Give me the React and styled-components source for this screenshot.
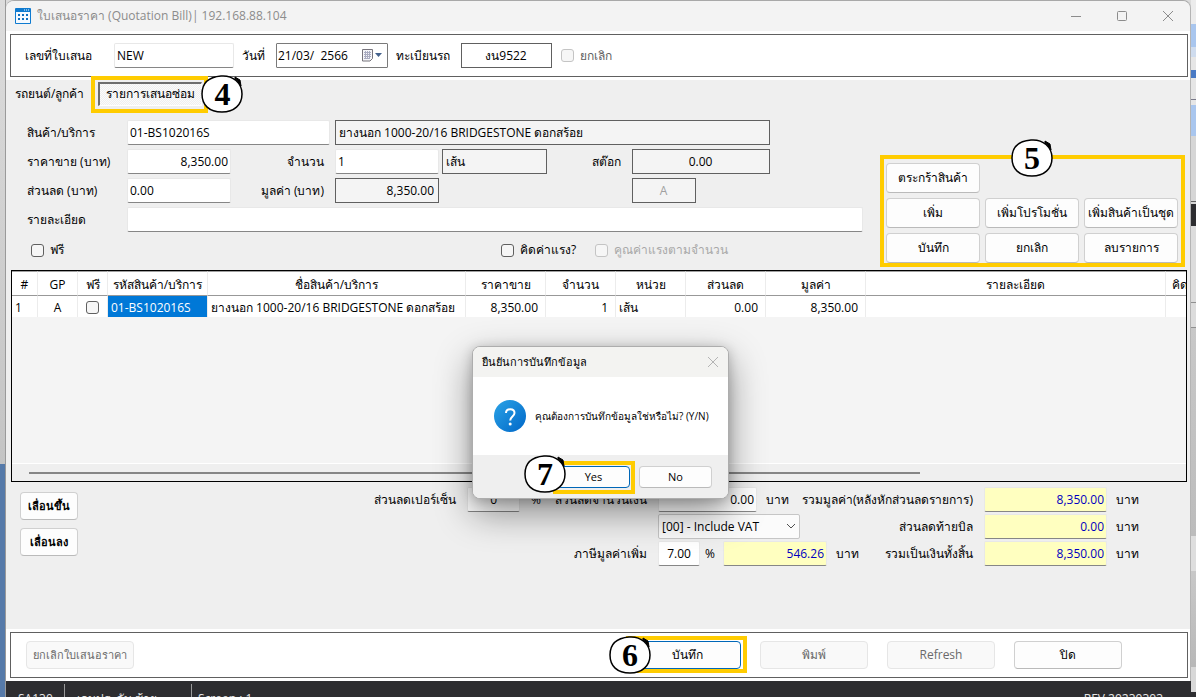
import React from 'react'
import styled, { createGlobalStyle, css } from 'styled-components'

const GlobalStyle = createGlobalStyle`
    * {
        box-sizing: border-box;
    }

    body {
        margin: 0;
        background: #e4e4e4;
    }

    body, input, select, button {
        font-family: "Open Sans", "Noto Sans", "Liberation Sans", sans-serif;
        font-size: 12px;
        line-height: 16px;
        color: #000;
    }
`

const yellow = '#ffcc00'

const Desktop = styled.div`
    position: relative;
    display: flex;
    height: 100vh;
    overflow: hidden;
`

const LeftEdge = styled.div`
    flex: none;
    width: 6px;
    background: linear-gradient(#dcdcdc, #c4c4c4) top / 100% 464px no-repeat, #567aa9;
    border-right: 1px solid #9a9a9a;
`

const RightEdge = styled.div`
    flex: none;
    width: 5px;
    background: linear-gradient(
        #ececec 24px, #a9c6ee 24px, #a9c6ee 47px, #cfdcee 47px, #cfdcee 57px, #e6e6e6 57px,
        #e6e6e6 70px, #4a7ac4 70px, #4a7ac4 78px, #e6e6e6 78px, #e6e6e6 99px, #7a7a8a 99px,
        #7a7a8a 100px, #e6e6e6 100px, #e6e6e6 105px, #a9c6ee 105px, #a9c6ee 136px,
        #d6d6d6 136px, #d6d6d6 201px, #606060 201px, #606060 202px, #d6d6d6 202px,
        #d6d6d6 204px, #2d2d30 204px, #2d2d30 226px, #dcdcdc 226px, #dcdcdc 302px,
        #909090 302px, #909090 303px, #dcdcdc 303px, #dcdcdc 327px, #909090 327px,
        #909090 328px, #c8c8c8 328px, #bcbcbc 536px, #dedede 536px, #dedede 571px,
        #c8c8c8 571px, #b8b8b8 667px, #d8d8d8 667px, #d8d8d8 692px, #2d2d30 692px
    );
`

const Column = styled.div`
    flex: 1;
    min-width: 0;
    display: flex;
    flex-direction: column;
    background: linear-gradient(#dcdcdc 20px, #2d2d30 20px);
`

const Window = styled.main`
    flex: 1;
    min-height: 0;
    display: flex;
    flex-direction: column;
    background: #efefef;
    border-top: 1px solid #a8a8a8;
    border-right: 1px solid #b4b4b4;
    border-radius: 8px 8px 0 0;
`

const TitleBar = styled.header`
    display: flex;
    align-items: center;
    gap: 6px;
    height: 30px;
    padding: 0 16px 0 9px;
    background: #f3f3f3;
    border-radius: 8px 8px 0 0;
    color: #8c8c8c;

    h1 {
        flex: 1;
        margin: 0;
        font-size: 12px;
        font-weight: 400;
    }
`

const WindowButton = styled.button`
    display: flex;
    padding: 0;
    margin-left: 28px;
    border: 0;
    background: none;
    color: #8c8c8c;
`

const Band = styled.section`
    padding: 3px 2px 3px 4px;
    background: #fff;
`

const Frame = styled.div`
    display: flex;
    align-items: center;
    height: ${props => props.$tall ? '46px' : '43px'};
    padding: ${props => props.$tall ? '0 65px 0 15px' : '0 14px'};
    gap: ${props => props.$tall ? '19px' : '0'};
    border: 1px solid #606060;
`

const Label = styled.label`
    flex: none;
    width: ${props => props.$width || 'auto'};
    text-align: ${props => props.$align || 'left'};
    padding-right: ${props => props.$align === 'right' ? '11px' : '0'};
    white-space: nowrap;
`

const Input = styled.input`
    flex: ${props => props.$grow ? '1' : 'none'};
    min-width: 0;
    width: ${props => props.$width};
    height: 25px;
    padding: 0 2px;
    border: 1px solid #e8e8e8;
    border-bottom-color: #868686;
    border-radius: 2px;
    background: #fff;
    text-align: ${props => props.$align || 'left'};

    ${props => props.$frame && css`
        padding: 0 4px 0 3px;
        border-color: #606060;
        border-radius: 0;
        background: ${props.$white ? '#fff' : '#f4f4f4'};
    `}

    ${props => props.$total && css`
        background: #ffffc0;
        color: #0000c0;
    `}

    &:disabled {
        color: #a0a0a0;
    }
`

const DateBox = styled.div`
    display: flex;
    align-items: center;
    width: 112px;
    height: 25px;
    padding-right: 5px;
    border: 1px solid #7a7a7a;
    border-radius: 1px;

    input {
        flex: 1;
        min-width: 0;
        padding: 0 1px;
        border: 0;
        background: none;
    }
`

const Check = styled.label`
    display: flex;
    align-items: center;
    gap: 6px;
    color: ${props => props.$muted || '#000'};
    white-space: nowrap;
`

const CheckBox = styled.input.attrs({ type: 'checkbox' })`
    appearance: none;
    flex: none;
    width: 13px;
    height: 13px;
    margin: 0;
    border: 1px solid #606060;
    border-radius: 3px;
    background: #f6f6f6;

    &:disabled {
        border-color: #c4c4c4;
    }
`

const CancelCheck = styled(Check)`
    margin-left: 9px;
`

const Button = styled.button`
    flex: none;
    width: ${props => props.$width || '94px'};
    height: ${props => props.$height || '30px'};
    padding: 0;
    border: 1px solid #d0d0d0;
    border-bottom-color: #bababa;
    border-radius: 4px;
    background: #fdfdfd;
    font-size: ${props => props.$small ? '11px' : '12px'};
    font-weight: ${props => props.$bold ? '700' : '400'};
    white-space: nowrap;

    ${props => props.$primary && css`
        border-color: #0067b8;
    `}

    &:disabled {
        border-color: #e6e6e6;
        background: #f9f9f9;
        color: #6a6a6a;
    }
`

const Marked = styled.div`
    position: relative;
    display: flex;
`

const Marker = styled.div`
    position: absolute;
    inset: ${props => props.$inset};
    border: 4px solid ${yellow};
    pointer-events: none;
`

const BadgeBox = styled.div`
    position: absolute;
    left: ${props => props.$left};
    top: ${props => props.$top};
    width: 42px;
    height: 38px;
    display: grid;
    place-items: center;
    font: 700 32px/38px "Liberation Serif", serif;

    svg {
        position: absolute;
        inset: 0;
    }

    span {
        position: relative;
    }
`

const Tabs = styled.nav`
    display: flex;
    align-items: center;
    height: 27px;
    padding-left: 9px;
    gap: 14px;

    a {
        color: #000;
        text-decoration: none;
    }
`

const ActiveTab = styled.button`
    width: 104px;
    height: 24px;
    padding: 0;
    border: 1px solid #fff;
    border-top: 2px solid #6e6e6e;
    border-left: 2px solid #6e6e6e;
    background: repeating-conic-gradient(#efefef 0 25%, #fbfbfb 0 50%) 0 0 / 2px 2px;
`

const Entry = styled.section`
    display: flex;
    justify-content: space-between;
    padding: 13px 12px 0 21px;
`

const Form = styled.form`
    flex: 1;
    display: flex;
    flex-direction: column;
    gap: 4px;
`

const Row = styled.div`
    display: flex;
    align-items: center;
    height: 25px;
    gap: ${props => props.$gap || '0'};
`

const CheckRow = styled.div`
    display: grid;
    grid-template-columns: 470px 94px 1fr;
    height: 34px;
    padding: 0 0 6px 4px;
    align-items: center;
`

const Actions = styled.div`
    position: relative;
    display: grid;
    grid-template-columns: repeat(3, 94px);
    gap: 5px;
    align-content: start;
    padding-top: 43px;
    margin-left: 23px;
`

const ActionGap = styled.span`
    grid-column: span 2;
`

const GridFrame = styled.section`
    display: flex;
    flex-direction: column;
    height: 212px;
    margin: 0 3px 0 5px;
    overflow: hidden;
    border: 1px solid #000;
    background: #f4f4f4;
`

const Items = styled.table`
    width: 1218px;
    table-layout: fixed;
    border-collapse: separate;
    border-spacing: 0;
    background: #fff;

    th, td {
        padding: 2px 3px 0;
        overflow: hidden;
        border-right: 1px solid #ececec;
        font-weight: 400;
        white-space: nowrap;
    }

    th {
        height: 25px;
        border-top: 1px solid #a0a0a0;
        border-bottom: 1px solid #989898;
        text-align: center;
    }

    td {
        height: 21px;
    }
`

const Cell = styled.td`
    text-align: ${props => props.$align || 'left'};
    color: ${props => props.$selected ? '#fff' : '#000'};
    background: ${props => props.$selected ? '#0078d7' : '#fff'};

    && {
        padding-right: ${props => props.$align === 'right' ? '7px' : '3px'};
    }

    input {
        display: block;
        margin: 0 auto;
    }
`

const ScrollTrack = styled.div`
    margin-top: auto;
    height: 18px;
    padding: 8px 0 0 17px;
    border-top: 1px solid #fff;
    background: #efefef;
`

const ScrollThumb = styled.div`
    width: 77%;
    height: 2px;
    background: #868686;
`

const Bottom = styled.section`
    flex: 1;
    display: flex;
    padding: 5px 52px 0 14px;
`

const MoveButtons = styled.div`
    display: flex;
    flex-direction: column;
    gap: 8px;
    padding-top: 5px;
`

const Summary = styled.div`
    flex: 1;
    display: flex;
    flex-direction: column;
    gap: 2px;
`

const Percent = styled.div`
    display: flex;
    align-items: center;
    justify-content: flex-end;
    width: 463px;
    gap: 11px;
`

const VatSelect = styled.div`
    position: relative;
    width: 142px;

    select {
        appearance: none;
        width: 100%;
        height: 25px;
        padding: 0 3px;
        border: 1px solid #c6c6c6;
        border-radius: 2px;
        background: #fbfbfb;
    }

    svg {
        position: absolute;
        right: 4px;
        top: 8px;
    }
`

const Unit = styled.span`
    width: ${props => props.$width || '31px'};
    padding-left: ${props => props.$pad || '9px'};
    white-space: nowrap;
`

const Spacer = styled.span`
    flex: 1;
`

const StatusBar = styled.footer`
    flex: none;
    display: flex;
    height: 16px;
    overflow: hidden;
    padding: 3px 28px 0 0;
    background: #2d2d30;
    color: #e6e6e6;

    span {
        flex: none;
        width: 127px;
        height: 26px;
        padding: 7px 6px 0 12px;
        border-right: 1px solid #9a9a9a;
        white-space: nowrap;
    }

    span:first-child {
        width: 59px;
    }

    span:nth-child(3) {
        flex: 1;
        border: 0;
        padding-left: 6px;
    }

    span:last-child {
        width: auto;
        padding-right: 0;
        border: 0;
    }
`

const Dialog = styled.div`
    position: absolute;
    left: 50%;
    top: 346px;
    width: 257px;
    margin-left: -126px;
    border: 1px solid #adadad;
    border-radius: 8px;
    background: #fff;
    box-shadow: 0 14px 36px rgba(0, 0, 0, 0.42), 0 2px 12px rgba(0, 0, 0, 0.2);

    header {
        display: flex;
        align-items: center;
        justify-content: space-between;
        height: 30px;
        padding: 0 9px;
        border-radius: 7px 7px 0 0;
        background: #f3f3f1;
    }

    h2 {
        margin: 0;
        font-size: 11px;
        font-weight: 400;
    }

    p {
        display: flex;
        align-items: center;
        gap: 9px;
        height: 78px;
        margin: 0;
        padding-left: 21px;
        font-size: 10px;
        white-space: nowrap;
    }

    footer {
        display: flex;
        align-items: flex-start;
        justify-content: flex-end;
        gap: 9px;
        height: 43px;
        padding: 11px 16px 0 0;
        border-radius: 0 0 7px 7px;
        background: #efefef;
    }
`

const Badge = ({ n, left, top }) => (
    <BadgeBox $left={left} $top={top}>
        <svg width="42" height="38" viewBox="0 0 42 38" fill="none" stroke="#000" strokeWidth="1.5">
            <path d="M20 1C32 0 41 8 41 19C41 30 33 37 21 37C8 37 1 30 1 19C1 8 8 2 20 1Z" fill="#fff" />
            <path d="M34 2L39 5L40 11C38 8 36 5 34 4Z" fill="#000" strokeWidth="1" />
        </svg>
        <span>{n}</span>
    </BadgeBox>
)

const AppIcon = () => (
    <svg width="16" height="16" viewBox="0 0 16 16">
        <rect width="16" height="16" rx="1" fill="#0f7bd0" />
        <rect x="1" y="4" width="14" height="11" fill="#f5faff" />
        <path d="M9 2h1M11 2h1M13 2h1" stroke="#fff" />
        <path d="M3 6h2v2H3zM7 6h2v2H7zM11 6h2v2h-2zM3 10h2v2H3zM7 10h2v2H7zM11 10h2v2h-2z" fill="#0f6fc0" />
    </svg>
)

const CalendarIcon = () => (
    <svg width="20" height="13" viewBox="0 0 20 13">
        <path d="M.5.5h10v9l-2.500 2.500h-7.500z" fill="#f5f5f8" stroke="#77747c" />
        <path d="M2 3.500h7M2 5.500h7M2 7.500h7M2 9.500h5M3.500 2v8M5.500 2v8M7.500 2v8" stroke="#a9abc0" />
        <path d="M13 4h7l-3.500 4z" fill="#44618c" />
    </svg>
)

const columns = [
    ['#', 26], ['GP', 40], ['ฟรี', 30], ['รหัสสินค้า/บริการ', 100], ['ชื่อสินค้า/บริการ', 258],
    ['ราคาขาย', 80], ['จำนวน', 70], ['หน่วย', 70], ['ส่วนลด', 80], ['มูลค่า', 100],
    ['รายละเอียด', 300], ['คิดค่าแรง', 64],
]

const QuoteHeader = () => (
    <Band>
        <Frame>
            <Label htmlFor="billNo" $width="89px">เลขที่ใบเสนอ</Label>
            <Input id="billNo" $width="120px" defaultValue="NEW" />
            <Label htmlFor="date" $width="42px" $align="right">วันที่</Label>
            <DateBox>
                <input id="date" defaultValue="21/03/  2566" />
                <CalendarIcon />
            </DateBox>
            <Label htmlFor="plate" $width="73px" $align="right">ทะเบียนรถ</Label>
            <Input id="plate" $width="91px" $align="center" $frame $white defaultValue="งน9522" />
            <CancelCheck $muted="#606060"><CheckBox disabled />ยกเลิก</CancelCheck>
        </Frame>
    </Band>
)

const EntryForm = () => (
    <Form>
        <Row $gap="5px">
            <Label htmlFor="code" $width="95px">สินค้า/บริการ</Label>
            <Input id="code" $width="203px" defaultValue="01-BS102016S" />
            <Input aria-label="ชื่อสินค้า" $width="435px" $frame readOnly value="ยางนอก 1000-20/16 BRIDGESTONE ดอกสร้อย" />
        </Row>
        <Row>
            <Label htmlFor="price" $width="100px">ราคาขาย (บาท)</Label>
            <Input id="price" $width="104px" $align="right" defaultValue="8,350.00" />
            <Label htmlFor="qty" $width="104px" $align="right">จำนวน</Label>
            <Input id="qty" $width="104px" defaultValue="1" />
            <Unit $width="3px" $pad="0" />
            <Input aria-label="หน่วย" $width="105px" $frame readOnly value="เส้น" />
            <Label htmlFor="stock" $width="85px" $align="right">สต๊อก</Label>
            <Input id="stock" $width="138px" $align="center" $frame readOnly value="0.00" />
        </Row>
        <Row>
            <Label htmlFor="discount" $width="100px">ส่วนลด (บาท)</Label>
            <Input id="discount" $width="104px" defaultValue="0.00" />
            <Label htmlFor="value" $width="104px" $align="right">มูลค่า (บาท)</Label>
            <Input id="value" $width="104px" $align="right" $frame readOnly value="8,350.00" />
            <Unit $width="193px" />
            <Input aria-label="GP" $width="64px" $align="center" $frame disabled value="A" />
        </Row>
        <Row>
            <Label htmlFor="detail" $width="100px">รายละเอียด</Label>
            <Input id="detail" $grow />
        </Row>
        <CheckRow>
            <Check><CheckBox />ฟรี</Check>
            <Check><CheckBox />คิดค่าแรง?</Check>
            <Check $muted="#a8a8a8"><CheckBox disabled />คูณค่าแรงตามจำนวน</Check>
        </CheckRow>
    </Form>
)

const ItemGrid = () => (
    <GridFrame>
        <Items>
            <colgroup>
                {columns.map(([name, width]) => <col key={name} width={width} />)}
            </colgroup>
            <thead>
                <tr>{columns.map(([name]) => <th key={name}>{name}</th>)}</tr>
            </thead>
            <tbody>
                <tr>
                    <Cell>1</Cell>
                    <Cell $align="center">A</Cell>
                    <Cell><CheckBox aria-label="ฟรี" /></Cell>
                    <Cell $selected>01-BS102016S</Cell>
                    <Cell>ยางนอก 1000-20/16 BRIDGESTONE ดอกสร้อย</Cell>
                    <Cell $align="right">8,350.00</Cell>
                    <Cell $align="right">1</Cell>
                    <Cell>เส้น</Cell>
                    <Cell $align="right">0.00</Cell>
                    <Cell $align="right">8,350.00</Cell>
                    <Cell />
                    <Cell />
                </tr>
            </tbody>
        </Items>
        <ScrollTrack><ScrollThumb /></ScrollTrack>
    </GridFrame>
)

const Total = ({ id, label, value }) => (
    <>
        <Spacer />
        <Label htmlFor={id} $align="right">{label}</Label>
        <Input id={id} $width="123px" $align="right" $total readOnly value={value} />
        <Unit>บาท</Unit>
    </>
)

const Totals = () => (
    <Bottom>
        <MoveButtons>
            <Button $width="58px" $height="28px" $small $bold>เลื่อนขึ้น</Button>
            <Button $width="58px" $height="28px" $small $bold>เลื่อนลง</Button>
        </MoveButtons>
        <Summary>
            <Row>
                <Percent>
                    <label htmlFor="pct">ส่วนลดเปอร์เซ็น</label>
                    <Input id="pct" $width="53px" $align="center" defaultValue="0" />
                    %
                </Percent>
                <Label htmlFor="cash" $width="117px" $align="right">ส่วนลดจำนวนเงิน</Label>
                <Input id="cash" $width="99px" $align="right" defaultValue="0.00" />
                <Unit>บาท</Unit>
                <Total id="sum" label="รวมมูลค่า(หลังหักส่วนลดรายการ)" value="8,350.00" />
            </Row>
            <Row>
                <Percent />
                <Unit $width="117px" />
                <VatSelect>
                    <select aria-label="VAT"><option>[00] - Include VAT</option></select>
                    <svg width="10" height="8" viewBox="0 0 10 8" fill="none" stroke="#505050">
                        <path d="M1 2l4 4 4-4" />
                    </svg>
                </VatSelect>
                <Total id="billDiscount" label="ส่วนลดท้ายบิล" value="0.00" />
            </Row>
            <Row>
                <Percent />
                <Label htmlFor="vat" $width="117px" $align="right">ภาษีมูลค่าเพิ่ม</Label>
                <Input id="vat" $width="42px" $align="center" defaultValue="7.00" />
                <Unit $width="23px" $pad="5px">%</Unit>
                <Input aria-label="VAT amount" $width="104px" $align="right" $total readOnly value="546.26" />
                <Unit>บาท</Unit>
                <Total id="grand" label="รวมเป็นเงินทั้งสิ้น" value="8,350.00" />
            </Row>
        </Summary>
    </Bottom>
)

const ConfirmDialog = () => (
    <Dialog role="dialog" aria-labelledby="confirmTitle">
        <header>
            <h2 id="confirmTitle">ยืนยันการบันทึกข้อมูล</h2>
            <WindowButton aria-label="Close">
                <svg width="12" height="12" viewBox="0 0 12 12" stroke="#b4b4b4"><path d="M1 1l10 10M11 1L1 11" /></svg>
            </WindowButton>
        </header>
        <p>
            <svg width="32" height="32" viewBox="0 0 32 32" fill="none">
                <defs>
                    <linearGradient id="ask" x1="0" y1="0" x2="1" y2="1">
                        <stop stopColor="#2ba3e6" />
                        <stop offset="1" stopColor="#0067c8" />
                    </linearGradient>
                </defs>
                <circle cx="16" cy="16" r="16" fill="url(#ask)" />
                <path d="M12 13c0-5 8.500-5 8.500 0 0 3.500-4.300 3.500-4.300 7.500" stroke="#fff" strokeWidth="2" />
                <circle cx="16.200" cy="24" r="1.500" fill="#fff" />
            </svg>
            คุณต้องการบันทึกข้อมูลใช่หรือไม่? (Y/N)
        </p>
        <footer>
            <Marked>
                <Button $width="73px" $height="22px" $small $primary>Yes</Button>
                <Marker $inset="-5px -5px -6px -4px" />
                <Badge n="7" left="-33px" top="-11px" />
            </Marked>
            <Button $width="73px" $height="22px" $small>No</Button>
        </footer>
    </Dialog>
)

const App = () => {
    return (
        <Desktop>
            <GlobalStyle />
            <LeftEdge />
            <Column>
                <Window>
                    <TitleBar>
                        <AppIcon />
                        <h1>ใบเสนอราคา (Quotation Bill)| 192.168.88.104</h1>
                        <WindowButton aria-label="Minimize">
                            <svg width="12" height="12" viewBox="0 0 12 12" stroke="#8c8c8c"><path d="M1 6.500h10" /></svg>
                        </WindowButton>
                        <WindowButton aria-label="Maximize">
                            <svg width="12" height="12" viewBox="0 0 12 12" fill="none" stroke="#8c8c8c"><rect x="1.500" y="1.500" width="9" height="9" rx="1" /></svg>
                        </WindowButton>
                        <WindowButton aria-label="Close">
                            <svg width="12" height="12" viewBox="0 0 12 12" stroke="#8c8c8c"><path d="M1 1l10 10M11 1L1 11" /></svg>
                        </WindowButton>
                    </TitleBar>
                    <QuoteHeader />
                    <Tabs>
                        <a href="#car">รถยนต์/ลูกค้า</a>
                        <Marked>
                            <ActiveTab>รายการเสนอซ่อม</ActiveTab>
                            <Marker $inset="-6px -6px -7px -7px" />
                            <Badge n="4" left="103px" top="-7px" />
                        </Marked>
                    </Tabs>
                    <Entry>
                        <EntryForm />
                        <Actions>
                            <Button>ตระกร้าสินค้า</Button>
                            <ActionGap />
                            <Button>เพิ่ม</Button>
                            <Button>เพิ่มโปรโมชั่น</Button>
                            <Button>เพิ่มสินค้าเป็นชุด</Button>
                            <Button>บันทึก</Button>
                            <Button>ยกเลิก</Button>
                            <Button>ลบรายการ</Button>
                            <Marker $inset="35px -7px 3px -6px" />
                            <Badge n="5" left="125px" top="19px" />
                        </Actions>
                    </Entry>
                    <ItemGrid />
                    <Totals />
                    <Band>
                        <Frame $tall>
                            <Button $width="108px" $height="28px" $small disabled>ยกเลิกใบเสนอราคา</Button>
                            <Spacer />
                            <Marked>
                                <Button $width="108px" $height="28px" $primary>บันทึก</Button>
                                <Marker $inset="-5px -6px -4px -7px" />
                                <Badge n="6" left="-24px" top="-5px" />
                            </Marked>
                            <Button $width="108px" $height="28px" disabled>พิมพ์</Button>
                            <Button $width="108px" $height="28px" disabled>Refresh</Button>
                            <Button $width="108px" $height="28px">ปิด</Button>
                        </Frame>
                    </Band>
                </Window>
                <StatusBar>
                    <span>SA130</span>
                    <span>เจนประดับ ซ้าย</span>
                    <span>Screen : 1</span>
                    <span>REV 20230303</span>
                </StatusBar>
            </Column>
            <RightEdge />
            <ConfirmDialog />
        </Desktop>
    )
}

export default App
